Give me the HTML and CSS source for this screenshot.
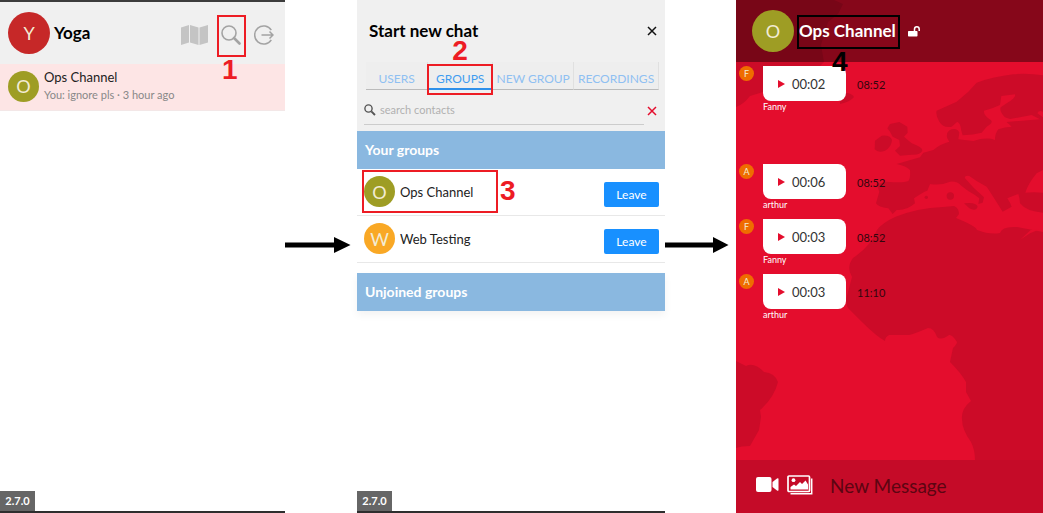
FILE: index.html
```html
<!DOCTYPE html>
<html lang="en">
<head>
  <meta charset="UTF-8">
  <meta name="viewport" content="width=device-width, initial-scale=1.0">
  <title>Join a group channel</title>
  <link rel="stylesheet" href="styles.css">
</head>
<body>

<div class="steps">

  <!-- Contact list -->
  <section class="panel panel-home">
    <header class="home-header">
      <span class="avatar avatar-lg red">Y</span>
      <h1 class="title">Yoga</h1>
      <div class="home-actions">
        <button class="icon-btn" aria-label="Map">
          <svg width="27" height="20" viewBox="0 0 27 20"><path fill="#c4c4c4" d="M0 2.500L8 0v17.500L0 20zM9 0l8.500 2.500V20L9 17.500zM18.500 2.500L27 0v17.500L18.500 20z"/></svg>
        </button>
        <button class="icon-btn marked" aria-label="Search">
          <svg width="20" height="20" viewBox="0 0 20 20" fill="none" stroke="#a3a3a3"><circle cx="8" cy="8" r="7" stroke-width="1.6"/><path d="M13 13l5.500 5.500" stroke-width="2.600" stroke-linecap="round"/></svg>
          <span class="mark mark-search"></span>
          <span class="num num-1">1</span>
        </button>
        <button class="icon-btn" aria-label="Log out">
          <svg width="20" height="20" viewBox="0 0 20 20" fill="none" stroke="#a3a3a3" stroke-width="1.5"><path d="M17.300 5.200A9 9 0 1 0 17.300 14.800"/><path d="M7.500 10H19M15.500 6.500L19 10l-3.500 3.500"/></svg>
        </button>
      </div>
    </header>
    <div class="contact">
      <span class="avatar avatar-md olive">O</span>
      <div>
        <div class="name">Ops Channel</div>
        <div class="preview">You: ignore pls · 3 hour ago</div>
      </div>
    </div>
    <footer class="version"><span>2.7.0</span></footer>
  </section>

  <div class="arrow">
    <svg width="66" height="18" viewBox="0 0 66 18"><path d="M0 6.500h49V1l16.500 8L49 17v-5.500H0z"/></svg>
  </div>

  <!-- Start new chat -->
  <section class="panel">
    <div class="chat-top">
      <header class="new-header">
        <h2 class="title">Start new chat</h2>
        <button class="icon-btn" aria-label="Close">
          <svg width="10" height="10" viewBox="0 0 10 10" stroke="#111" stroke-width="1.5"><path d="M1 1l8 8M9 1L1 9"/></svg>
        </button>
      </header>
      <nav class="tabs">
        <button class="tab tab-users">USERS</button>
        <button class="tab tab-groups active">GROUPS<span class="mark mark-groups"></span><span class="num num-2">2</span></button>
        <button class="tab tab-new">NEW GROUP</button>
        <button class="tab tab-rec">RECORDINGS</button>
      </nav>
      <div class="search">
        <label class="search-field">
          <svg width="12" height="12" viewBox="0 0 12 12" fill="none" stroke="#555"><circle cx="4.500" cy="4.500" r="3.600" stroke-width="1.4"/><path d="M7.300 7.300L11 11" stroke-width="1.9"/></svg>
          <input type="text" placeholder="search contacts" aria-label="search contacts">
        </label>
        <button class="icon-btn" aria-label="Clear search">
          <svg width="10" height="10" viewBox="0 0 10 10" stroke="#e40d2d" stroke-width="1.5"><path d="M1 1l8 8M9 1L1 9"/></svg>
        </button>
      </div>
    </div>

    <h3 class="group-title">Your groups</h3>
    <div class="group">
      <span class="avatar avatar-md olive">O</span>
      <span class="name">Ops Channel</span>
      <button class="leave">Leave</button>
      <span class="mark mark-group"></span>
      <span class="num num-3">3</span>
    </div>
    <div class="group">
      <span class="avatar avatar-md orange">W</span>
      <span class="name">Web Testing</span>
      <button class="leave">Leave</button>
    </div>
    <h3 class="group-title unjoined">Unjoined groups</h3>
    <footer class="version"><span>2.7.0</span></footer>
  </section>

  <div class="arrow">
    <svg width="66" height="18" viewBox="0 0 66 18"><path d="M0 6.500h48V1l15.500 8L48 17v-5.500H0z"/></svg>
  </div>

  <!-- Channel -->
  <section class="panel panel-channel">
    <svg class="map" viewBox="0 0 307 513" preserveAspectRatio="xMidYMin slice" fill="#cc0b28" aria-hidden="true">
      <!-- Greenland, Iceland -->
      <path d="M0 0H98L107 4 102 14 92 22 85 45 88 62 80 70 40 75Q28 80 27 92 L14 96Q8 104 0 107z"/>
      <path d="M104 94Q114 91 118 97 114 102 104 104z"/>
      <!-- South America -->
      <path d="M0 361L10 366Q18 362 28 372 39 373 42 382 38 398 24 410L25 417 23 430 14 446Q5 446 0 448z"/>
      <!-- Africa -->
      <path d="M141 230Q146 223 159 217 181 208 207 207L218 206Q223 208 223 214L220 218Q240 226 241 230 254 235 264 233 266 226 281 227L307 232V513H239V460Q239 450 235 442 226 430 226 419 225 409 235 401L230 392V382Q225 373 214 362L217 348Q221 344 221 342 216 334 213 335 205 341 201 337 198 328 192 328 178 334 173 335H153Q149 337 149 341 140 336 126 322L112 308Q109 303 111 296L116 277Q110 267 117 258 135 246 141 230z"/>
      <!-- Europe -->
      <g transform="translate(104 60) scale(.3333)">
        <path d="M609 46Q560 38 520 43 460 50 410 68L385 95 350 125 290 152Q286 165 298 185 310 205 335 200L352 185Q362 190 364 212L368 226Q400 225 425 218L440 200Q462 188 452 180 430 165 432 152 460 145 480 135L484 108 525 103Q530 112 500 130L482 142Q478 155 495 172L510 177 575 165 600 178 500 186 515 200Q495 200 475 208 465 220 465 240 440 230 400 243L355 238 358 218Q352 203 335 208 316 215 322 235L328 245Q300 252 280 270L250 278 240 292 170 312Q200 318 210 330 212 355 205 363 190 370 140 365L110 372 118 395 108 430Q115 442 145 445L158 462 170 450Q200 452 225 430L222 415Q250 395 262 392L270 372Q300 378 330 365 350 362 365 378 385 395 405 405L418 415 415 432 428 428 432 412Q400 385 375 355 372 345 388 348 410 365 440 380 460 410 488 455L515 440Q512 430 502 415 520 408 535 402 540 415 540 430 560 455 609 458V398Q580 395 556 398 565 370 590 340L609 330z"/>
        <path d="M142 205L150 192 178 186 202 200 203 218 192 230 215 250Q248 262 247 272 240 286 215 284L180 287 165 272 180 258 178 240 158 230 150 215z"/>
        <path d="M125 227Q150 224 156 240 155 260 135 272 115 280 104 268L105 242z"/>
        <path d="M372 430Q408 425 413 440 408 455 388 445z"/>
        <circle cx="331" cy="408" r="11"/>
        <circle cx="259" cy="412" r="5"/>
        <path fill="#e40d2d" d="M592 160Q596 150 609 155V172zM540 540L572 510 600 508 570 520z"/>
      </g>
    </svg>

    <header class="channel-header">
      <span class="avatar avatar-lg olive">O</span>
      <h2 class="title channel-name">Ops Channel<span class="mark mark-channel"></span><span class="num num-4">4</span></h2>
      <button class="icon-btn" aria-label="Unlocked">
        <svg width="12" height="11" viewBox="0 0 12 11"><path fill="#fff" d="M1 5h7.500c.6 0 1 .4 1 1v3.500c0 .6-.4 1-1 1H1c-.6 0-1-.4-1-1V6c0-.6.4-1 1-1z"/><path fill="none" stroke="#fff" stroke-width="1.5" d="M6.500 5.500V3.200a2.300 2.300 0 0 1 4.700 0V5"/></svg>
      </button>
    </header>

    <div class="messages">
      <article class="message first">
        <span class="avatar avatar-sm amber">F</span>
        <div class="voice">
          <button class="bubble"><i class="play"></i>00:02</button>
          <span class="sender">Fanny</span>
        </div>
        <time>08:52</time>
      </article>
      <article class="message">
        <span class="avatar avatar-sm amber">A</span>
        <div class="voice">
          <button class="bubble"><i class="play"></i>00:06</button>
          <span class="sender">arthur</span>
        </div>
        <time>08:52</time>
      </article>
      <article class="message">
        <span class="avatar avatar-sm amber">F</span>
        <div class="voice">
          <button class="bubble"><i class="play"></i>00:03</button>
          <span class="sender">Fanny</span>
        </div>
        <time>08:52</time>
      </article>
      <article class="message">
        <span class="avatar avatar-sm amber">A</span>
        <div class="voice">
          <button class="bubble"><i class="play"></i>00:03</button>
          <span class="sender">arthur</span>
        </div>
        <time>11:10</time>
      </article>
    </div>

    <footer class="composer">
      <button class="icon-btn" aria-label="Send video">
        <svg width="23" height="16" viewBox="0 0 23 16" fill="#fff"><rect width="15.500" height="15" rx="2"/><path d="M16.500 5l4.500-3.500q1.500-.8 1.500.5v11q0 1.300-1.500.5L16.500 10z"/></svg>
      </button>
      <button class="icon-btn" aria-label="Send picture">
        <svg width="26" height="20" viewBox="0 0 26 20" fill="none" stroke="#fff"><rect x="1" y="1" width="21.500" height="15.500" rx="1" stroke-width="1.7"/><path d="M24.700 3.500v15.300H3.500" stroke-width="1.5"/><circle cx="6.500" cy="5.200" r="1.900" fill="#fff" stroke="none"/><path fill="#fff" stroke="none" d="M3.500 14.500V12l3.500-2.500 2 1.500 4-4 2 2 3.500-3.500 2.500 4v5z"/></svg>
      </button>
      <input type="text" placeholder="New Message" aria-label="New Message">
    </footer>
  </section>

</div>

</body>
</html>
```
FILE: styles.css
```css
* {
  box-sizing: border-box;
}

body {
  margin: 0;
  background: #fff;
  color: #222;
  font-family: Lato, "Open Sans", sans-serif;
  font-size: 13px;
  line-height: 18px;
}

button,
input {
  margin: 0;
  padding: 0;
  border: 0;
  background: none;
  color: inherit;
  font: inherit;
}

button {
  cursor: pointer;
}

svg {
  display: block;
}

.steps {
  display: grid;
  grid-template-columns: 285fr 72px 308fr 71px 307fr;
  min-height: 100vh;
}

.panel {
  display: flex;
  flex-direction: column;
  min-width: 0;
}

.title {
  margin: 0;
  font-size: 17px;
  font-weight: 700;
  line-height: 20px;
  color: #000;
}

.icon-btn {
  flex: none;
}

.arrow {
  padding-top: 236px;
}

/* Avatars */
.avatar {
  display: flex;
  flex: none;
  justify-content: center;
  align-items: center;
  border-radius: 50%;
  color: #f3ecd4;
}

.avatar-lg {
  width: 42px;
  height: 42px;
  font-size: 18px;
}

.avatar-md {
  width: 31px;
  height: 31px;
  font-size: 18px;
}

.avatar-sm {
  width: 15px;
  height: 15px;
  font-size: 9px;
}

.red { background: #c62828; }
.olive { background: #9e9d24; }
.orange { background: #f9a825; }
.amber { background: #ef6c00; }

/* Step marks */
.mark {
  position: absolute;
  border: 2px solid #ed1c24;
}

.num {
  position: absolute;
  color: #ed1c24;
  font: bold 28px/20px "Liberation Sans", sans-serif;
}

.marked {
  position: relative;
}

.mark-search {
  inset: -10px -5px -12px -4px;
}

.num-1 {
  top: 35px;
  left: 1px;
}

.mark-groups {
  inset: 2px -1px -7px -1px;
}

.num-2 {
  top: -21px;
  left: 24px;
}

.mark-group {
  top: 1px;
  bottom: 2px;
  left: 5px;
  width: 136px;
}

.num-3 {
  top: 12px;
  left: 143px;
}

.mark-channel {
  inset: -6px -4px -8px -2px;
  border-color: #000;
}

.num-4 {
  top: 31px;
  left: 33px;
  color: #000;
}

/* Contact list */
.home-header {
  display: flex;
  align-items: center;
  gap: 4px;
  height: 64px;
  padding: 0 11px 0 8px;
  border-top: 2px solid #3c3c3c;
  background: #f0f0f0;
}

.home-actions {
  display: flex;
  align-items: center;
  gap: 13px;
  margin-left: auto;
  padding-top: 3px;
}

.contact {
  display: flex;
  align-items: center;
  gap: 5px;
  padding: 4px 8px 6px;
  border-bottom: 1px solid #f3e7e7;
  background: #fde5e5;
}

.preview {
  color: #888;
  font-size: 11px;
}

.version {
  margin-top: auto;
  border-bottom: 2px solid #2e2e2e;
  color: #fff;
  font-size: 11px;
  font-weight: 700;
}

.version span {
  display: inline-block;
  width: 35px;
  height: 20px;
  background: #666;
  line-height: 20px;
  text-align: center;
  vertical-align: top;
}

/* Start new chat */
.chat-top {
  background: #f0f0f0;
}

.new-header {
  display: flex;
  justify-content: space-between;
  align-items: center;
  height: 62px;
  padding: 0 8px 0 12px;
}

.tabs {
  display: flex;
  margin: 0 6px 0 9px;
}

.tab {
  position: relative;
  height: 28px;
  padding-top: 7px;
  border-right: 1px solid #e0e0e0;
  border-bottom: 1px solid #bbb;
  background: #eee;
  color: #8fc0f2;
  font-size: 12px;
  white-space: nowrap;
}

.tab-users { flex: 62; }
.tab-groups { flex: 65; }
.tab-new { flex: 81; }
.tab-rec { flex: 85; }

.tab.active {
  border-bottom: 2px solid #2e90ea;
  color: #3f9cf0;
}

.search {
  display: flex;
  align-items: center;
  gap: 3px;
  height: 41px;
  padding: 0 8px 0 7px;
}

.search-field {
  display: flex;
  flex: 1;
  align-items: center;
  gap: 4px;
  min-width: 0;
  height: 28px;
  border-bottom: 1px solid #ccc;
}

.search-field input {
  flex: 1;
  min-width: 0;
  font-size: 11px;
  outline: none;
}

.search-field input::placeholder {
  color: #b0b0b0;
}

.group-title {
  margin: 0;
  padding: 10px 8px;
  background: #8ab8e0;
  color: #fff;
  font-size: 14px;
  font-weight: 700;
}

.unjoined {
  margin-top: 10px;
  box-shadow: 0 4px 8px rgba(0, 0, 0, 0.05);
}

.group {
  display: flex;
  position: relative;
  align-items: center;
  gap: 5px;
  padding: 7px 6px 8px 7px;
  border-bottom: 1px solid #e8e8e8;
}

.leave {
  align-self: flex-end;
  width: 55px;
  height: 25px;
  margin-left: auto;
  border-radius: 2px;
  background: #1890ff;
  color: #fff;
  font-size: 12px;
}

/* Channel */
.panel-channel {
  position: relative;
  background: #e40d2d;
  overflow: hidden;
}

.map {
  position: absolute;
  width: 100%;
  height: 100%;
}

.channel-header {
  display: flex;
  position: relative;
  z-index: 1;
  align-items: center;
  height: 62px;
  padding: 0 16px;
  background: rgba(0, 0, 0, 0.41);
}

.channel-name {
  position: relative;
  margin: 0 12px 0 5px;
  color: #fff;
}

.messages {
  position: relative;
  flex: 1;
  padding: 4px 3px;
}

.message {
  display: flex;
  height: 55px;
}

.message.first {
  margin-bottom: 43px;
}

.voice {
  margin: 0 11px 0 9px;
}

.bubble {
  display: flex;
  align-items: center;
  gap: 7px;
  width: 83px;
  height: 35px;
  padding-left: 15px;
  border-radius: 0 8px 8px 8px;
  background: #fff;
  color: #333;
  font-size: 13px;
}

.play {
  border: 4px solid transparent;
  border-right: 0;
  border-left: 7px solid #e40d2d;
}

.sender {
  display: block;
  color: #fff;
  font-size: 9px;
  line-height: 12px;
}

time {
  padding-top: 10px;
  color: #33060d;
  font-size: 11px;
}

.composer {
  display: flex;
  position: relative;
  align-items: center;
  gap: 8px;
  height: 53px;
  padding: 0 20px 3px;
  background: #c50b28;
}

.composer input {
  flex: 1;
  min-width: 0;
  margin-left: 9px;
  font-size: 19px;
  outline: none;
}

.composer input::placeholder {
  color: #5c0512;
}
```
